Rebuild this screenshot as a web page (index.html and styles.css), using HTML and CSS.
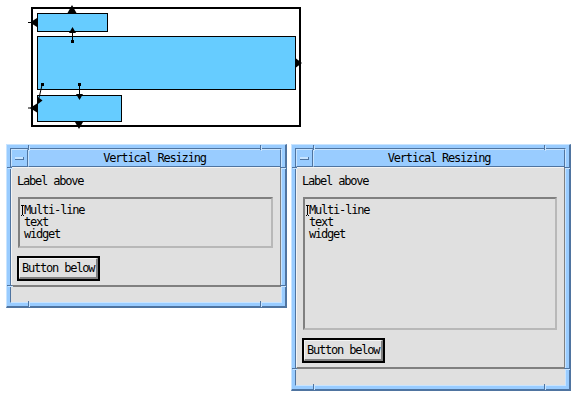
FILE: index.html
```html
<!DOCTYPE html>
<html lang="en">
<head>
  <meta charset="UTF-8" />
  <title>Vertical Resizing</title>
  <link rel="stylesheet" href="styles.css">
</head>
<body>

<div class="diagram">
  <svg width="310" height="132" viewBox="0 0 310 132">
    <rect x="32" y="8" width="268" height="118" fill="#fff" stroke="#000" stroke-width="2"/>
    <rect x="37.5" y="13.5" width="70" height="18" fill="#66ccff" stroke="#000"/>
    <rect x="37.5" y="36.5" width="258" height="53" fill="#66ccff" stroke="#000"/>
    <rect x="37.5" y="95.5" width="84" height="26" fill="#66ccff" stroke="#000"/>
    <!-- attachments to the form -->
    <polygon points="72,5 67.5,13 76.5,13" fill="#000"/>
    <polygon points="30,22.5 37,18 37,27" fill="#000"/>
    <line x1="28" y1="22.5" x2="32" y2="22.5" stroke="#000"/>
    <polygon points="302,63 296,58.5 296,67.5" fill="#000"/>
    <polygon points="30,108 37,103.5 37,112.5" fill="#000"/>
    <line x1="28" y1="108" x2="32" y2="108" stroke="#000"/>
    <polygon points="79,129 75,122 83,122" fill="#000"/>
    <!-- attachments between widgets -->
    <line x1="72.5" y1="31" x2="72.5" y2="41" stroke="#000"/>
    <polygon points="72.5,27 69,33 76,33" fill="#000"/>
    <rect x="71" y="40" width="3" height="3" fill="#000"/>
    <line x1="79.5" y1="85" x2="79.5" y2="96" stroke="#000"/>
    <polygon points="79.5,100 76,94 83,94" fill="#000"/>
    <rect x="78" y="83" width="3" height="3" fill="#000"/>
    <line x1="42" y1="85" x2="39" y2="98" stroke="#000"/>
    <rect x="41" y="83" width="3" height="3" fill="#000"/>
    <polygon points="42.5,100.5 38,97 38,104" fill="#000"/>
  </svg>
</div>

<div class="desktop">
  <div class="win win-short">
    <i class="tick tick-v tl"></i><i class="tick tick-h tl"></i>
    <i class="tick tick-v tr"></i><i class="tick tick-h tr"></i>
    <i class="tick tick-v bl"></i><i class="tick tick-h bl"></i>
    <i class="tick tick-v br"></i><i class="tick tick-h br"></i>
    <div class="client">
      <div class="titlebar">
        <div class="menu-btn"><span class="menu-bar"></span></div>
        <div class="title">Vertical Resizing</div>
      </div>
      <div class="pane">
        <div class="label">Label above</div>
        <div class="text-area">
          <div class="first-line"><span class="cursor"></span>Multi-line</div>
          <div>text</div>
          <div>widget</div>
        </div>
        <div class="btn-ring"><button class="btn">Button below</button></div>
      </div>
      <div class="status"></div>
    </div>
  </div>

  <div class="win win-tall">
    <i class="tick tick-v tl"></i><i class="tick tick-h tl"></i>
    <i class="tick tick-v tr"></i><i class="tick tick-h tr"></i>
    <i class="tick tick-v bl"></i><i class="tick tick-h bl"></i>
    <i class="tick tick-v br"></i><i class="tick tick-h br"></i>
    <div class="client">
      <div class="titlebar">
        <div class="menu-btn"><span class="menu-bar"></span></div>
        <div class="title">Vertical Resizing</div>
      </div>
      <div class="pane">
        <div class="label">Label above</div>
        <div class="text-area">
          <div class="first-line"><span class="cursor"></span>Multi-line</div>
          <div>text</div>
          <div>widget</div>
        </div>
        <div class="btn-ring"><button class="btn">Button below</button></div>
      </div>
      <div class="status"></div>
    </div>
  </div>
</div>

</body>
</html>
```

FILE: styles.css
```css
:root {
  --face: #e0e0e0;
  --shadow: #808080;
  --frame: #99ccff;
  --frame-hi: #c8e4ff;
  --frame-lo: #4f74a0;
}

body {
  margin: 0;
  background: #fff;
  color: #000;
  font-family: "DejaVu Sans Mono", monospace;
}

.diagram svg {
  display: block;
}

.desktop {
  display: flex;
  align-items: flex-start;
  gap: 4px;
  padding: 12px 0 0 6px;
}

.win {
  position: relative;
  display: flex;
  box-sizing: border-box;
  background: var(--frame);
  border-style: solid;
  border-width: 1px 2px 2px 1px;
  border-color: var(--frame-hi) var(--frame-lo) var(--frame-lo) var(--frame-hi);
  padding: 3px;
  font-size: 12px;
  letter-spacing: -1.2px;
}

.win-short {
  width: 281px;
  height: 164px;
}

.win-tall {
  width: 280px;
  height: 247px;
}

/* resize corner ticks in the frame */
.tick {
  position: absolute;
  background: var(--frame-lo);
  box-shadow: 1px 1px 0 var(--frame-hi);
}

.tick-v {
  width: 1px;
  height: 5px;
}

.tick-h {
  width: 5px;
  height: 1px;
}

.tick-v.tl, .tick-v.bl { left: 21px; }
.tick-v.tr, .tick-v.br { right: 24px; }
.tick-v.tl, .tick-v.tr { top: 0; }
.tick-v.bl, .tick-v.br { bottom: 0; }

.tick-h.tl, .tick-h.tr { top: 22px; }
.tick-h.bl, .tick-h.br { bottom: 20px; }
.tick-h.tl, .tick-h.bl { left: 0; }
.tick-h.tr, .tick-h.br { right: 0; }

.client {
  flex: 1;
  display: flex;
  flex-direction: column;
  border: 1px solid;
  border-color: var(--frame-lo) var(--frame-hi) var(--frame-hi) var(--frame-lo);
  background: var(--face);
}

.titlebar {
  display: flex;
  height: 18px;
  box-sizing: border-box;
  background: var(--frame);
}

.menu-btn {
  width: 17px;
  display: flex;
  align-items: center;
  justify-content: center;
  box-sizing: border-box;
  border-style: solid;
  border-width: 1px;
  border-color: var(--frame-hi) var(--frame-lo) var(--frame-lo) var(--frame-hi);
}

.menu-bar {
  width: 8px;
  height: 2px;
  background: var(--frame-hi);
  border-bottom: 1px solid var(--frame-lo);
  border-right: 1px solid var(--frame-lo);
  margin-top: 1px;
}

.title {
  flex: 1;
  text-align: center;
  line-height: 16px;
  border-style: solid;
  border-width: 1px;
  border-color: var(--frame-hi) var(--frame-lo) var(--frame-lo) var(--frame-hi);
}

.pane {
  flex: 1;
  display: flex;
  flex-direction: column;
  padding: 6px 4px 4px 5px;
  border-style: solid;
  border-width: 1px 1px 2px 1px;
  border-color: #f4f4f4 var(--shadow) var(--shadow) #f4f4f4;
}

.label {
  line-height: 13px;
  margin-top: 1px;
}

.text-area {
  position: relative;
  margin: 9px 3px 0 1px;
  padding: 5px 5px 6px 4px;
  line-height: 12px;
  border: 2px solid;
  border-color: var(--shadow) #b8b8b8 #b8b8b8 var(--shadow);
}

.win-tall .text-area {
  flex: 1;
}

.first-line {
  position: relative;
}

.cursor {
  position: absolute;
  left: -3px;
  top: 1px;
  width: 3px;
  height: 9px;
  border-top: 1px solid #000;
  border-bottom: 1px dotted #000;
  background: linear-gradient(#000, #000) center / 1px 100% no-repeat;
}

.btn-ring {
  align-self: flex-start;
  margin-top: 8px;
  border: 2px solid #000;
}

.btn {
  display: block;
  margin: 0;
  padding: 2px 2px 2px 2px;
  font: inherit;
  letter-spacing: inherit;
  line-height: 14px;
  color: #000;
  background: var(--face);
  border-style: solid;
  border-width: 1px 2px 2px 1px;
  border-color: #f4f4f4 var(--shadow) var(--shadow) #f4f4f4;
}

.status {
  height: 16px;
}
```
